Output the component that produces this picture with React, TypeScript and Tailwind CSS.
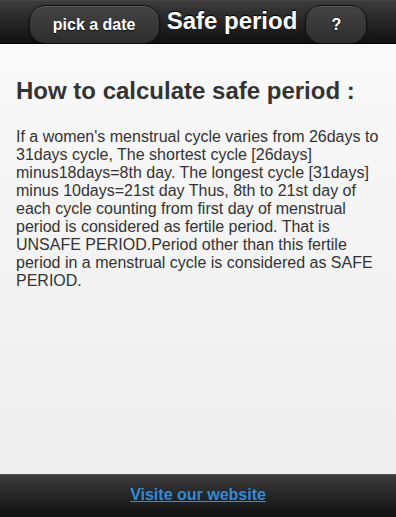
import React from "react";

export default function App() {
  const font = { fontFamily: '"Liberation Sans", Arial, Helvetica, sans-serif' };
  return (
    <div className="min-h-[517px] w-[396px] flex flex-col" style={font}>
      <header className="h-[44px] flex items-start justify-center gap-[7px] pt-[4px] bg-gradient-to-b from-[#3c3c3c] to-[#111111] border-t border-[#444] border-b border-b-[#000]">
        <button
          className="w-[131px] h-[39px] rounded-[16px] border border-[#111] bg-gradient-to-b from-[#444444] to-[#2d2d2d] text-white font-bold text-[16px] shadow-[inset_0_1px_0_rgba(255,255,255,0.12),0_1px_2px_rgba(0,0,0,0.6)] [text-shadow:0_1px_1px_#111]"
          style={font}
        >
          pick a date
        </button>
        <h1 className="text-white font-bold text-[24px] leading-normal [text-shadow:0_-1px_1px_#000] mx-0 -mt-[2px]">
          Safe period
        </h1>
        <button
          className="w-[62px] h-[39px] rounded-[16px] border border-[#111] bg-gradient-to-b from-[#444444] to-[#2d2d2d] text-white font-bold text-[16px] shadow-[inset_0_1px_0_rgba(255,255,255,0.12),0_1px_2px_rgba(0,0,0,0.6)] [text-shadow:0_1px_1px_#111] ml-[1px]"
          style={font}
        >
          ?
        </button>
      </header>
      <main className="flex-1 bg-gradient-to-b from-[#f9f9f9] to-[#eeeeee] px-4 pt-[15px] text-[#333]">
        <h2 className="text-[24px] font-bold leading-normal mt-[14px] mb-[19px] text-[#333]">
          How to calculate safe period :
        </h2>
        <p className="text-[16px] leading-[18px] text-[#333]">
          If a women's menstrual cycle varies from 26days to 31days cycle, The shortest cycle [26days] minus18days=8th day. The longest cycle [31days] minus 10days=21st day Thus, 8th to 21st day of each cycle counting from first day of menstrual period is considered as fertile period. That is UNSAFE PERIOD.Period other than this fertile period in a menstrual cycle is considered as SAFE PERIOD.
        </p>
      </main>
      <footer className="h-[43px] flex items-center justify-center pb-[3px] bg-gradient-to-b from-[#3c3c3c] to-[#111111] border-t border-[#555]">
        <a
          href="#"
          className="text-[#3a8ad0] font-bold text-[16px] underline [text-shadow:0_0_2px_#0b2a4a]"
        >
          Visite our website
        </a>
      </footer>
    </div>
  );
}
